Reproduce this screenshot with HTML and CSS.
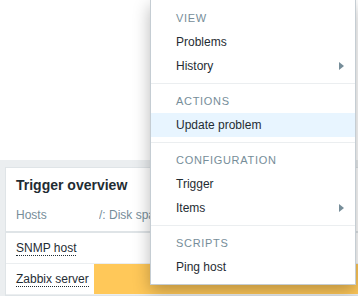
FILE: index.html
```html
<!DOCTYPE html>
<html lang="en">
<head>
    <meta charset="UTF-8">
    <title>Trigger overview</title>
    <link rel="stylesheet" href="styles.css">
</head>
<body>
    <div class="top-area"></div>

    <div class="dashboard">
        <div class="widget">
            <div class="widget-head">Trigger overview</div>
            <table class="overview">
                <thead>
                    <tr>
                        <th class="host-col">Hosts</th>
                        <th class="trigger-col"><div class="clip">/: Disk space is low</div></th>
                        <th></th>
                    </tr>
                </thead>
                <tbody>
                    <tr>
                        <td class="host-col"><span class="link">SNMP host</span></td>
                        <td></td>
                        <td></td>
                    </tr>
                    <tr>
                        <td class="host-col"><span class="link">Zabbix server</span></td>
                        <td class="average"></td>
                        <td class="average"></td>
                    </tr>
                </tbody>
            </table>
        </div>
    </div>

    <ul class="menu-popup">
        <li class="menu-head">View</li>
        <li class="menu-item">Problems</li>
        <li class="menu-item has-sub">History<span class="arrow"></span></li>
        <li class="menu-sep"></li>
        <li class="menu-head">Actions</li>
        <li class="menu-item selected">Update problem</li>
        <li class="menu-sep"></li>
        <li class="menu-head">Configuration</li>
        <li class="menu-item">Trigger</li>
        <li class="menu-item has-sub">Items<span class="arrow"></span></li>
        <li class="menu-sep"></li>
        <li class="menu-head">Scripts</li>
        <li class="menu-item">Ping host</li>
    </ul>
</body>
</html>
```

FILE: styles.css
```css
* {
    margin: 0;
    padding: 0;
    box-sizing: border-box;
}

body {
    font-family: "Liberation Sans", Arial, sans-serif;
    font-size: 12px;
    color: #1f2c33;
    background-color: #ebeef0;
    overflow: hidden;
}

.top-area {
    height: 160px;
    background-color: #fff;
}

.dashboard {
    padding: 7px 0 0 5px;
}

.widget {
    background-color: #fff;
    border: 1px solid #dfe4e7;
    border-right: none;
}

.widget-head {
    height: 32px;
    padding: 2px 10px 0;
    line-height: 30px;
    font-size: 14px;
    font-weight: bold;
    color: #1f2c33;
}

.overview {
    width: 100%;
    border-collapse: collapse;
    table-layout: fixed;
}

.overview th {
    height: 32px;
    padding: 0 5px 2px;
    text-align: left;
    font-weight: normal;
    color: #768d99;
    white-space: nowrap;
    border-bottom: 2px solid #dfe4e7;
}

.overview td {
    height: 31px;
    padding: 0 5px;
    border-bottom: 1px solid #ebeef0;
}

.overview .host-col {
    width: 88px;
    padding-left: 10px;
    white-space: nowrap;
}

.overview .trigger-col {
    width: 57px;
}

/* the popup covers the rest of this header */
.overview .clip {
    width: 52px;
    overflow: hidden;
}

.overview td.average {
    background-color: #ffc859;
}

.link {
    border-bottom: 1px dotted #1f2c33;
}

.menu-popup {
    position: absolute;
    top: 0;
    left: 150px;
    width: 206px;
    list-style: none;
    padding: 6px 0 5px;
    background-color: #fff;
    border: 1px solid #c5cdd3;
    border-top: none;
    box-shadow: 0 6px 16px rgba(0, 0, 0, 0.28);
}

.menu-head {
    height: 24px;
    line-height: 24px;
    padding-left: 25px;
    font-size: 11px;
    letter-spacing: 0.7px;
    text-transform: uppercase;
    color: #768d99;
}

.menu-item {
    display: flex;
    align-items: center;
    justify-content: space-between;
    height: 24px;
    padding: 0 11px 0 25px;
    color: #1f2c33;
}

.menu-item.selected {
    background-color: #e8f5ff;
}

.menu-item .arrow {
    width: 0;
    height: 0;
    border-top: 4px solid transparent;
    border-bottom: 4px solid transparent;
    border-left: 5px solid #768d99;
}

.menu-sep {
    height: 1px;
    margin: 5px 0;
    background-color: #ebeef0;
}
```
